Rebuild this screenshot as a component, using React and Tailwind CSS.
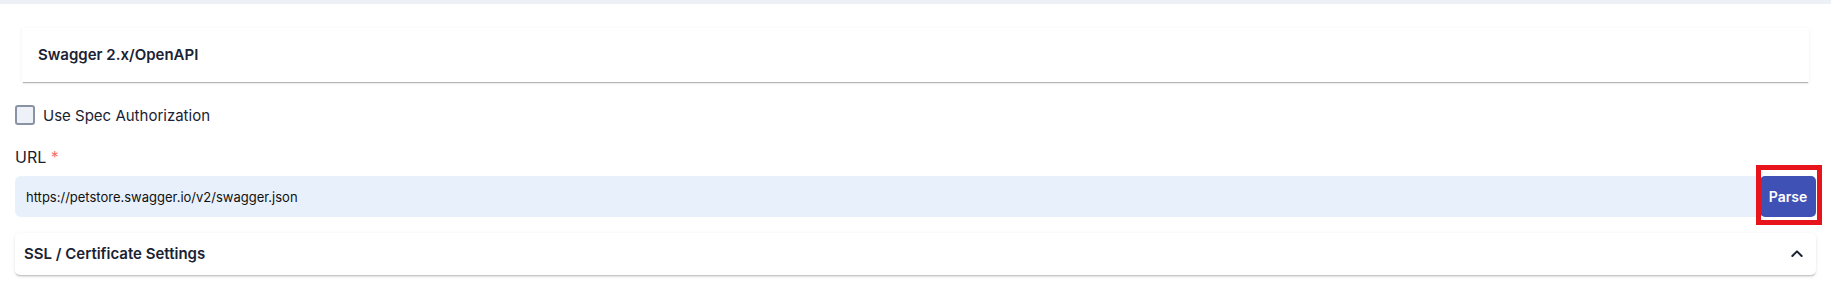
import { useState } from "react";

function ChevronUp() {
  return (
    <svg width="16" height="16" viewBox="0 0 24 24" fill="none" stroke="#1a2233" strokeWidth="3" strokeLinecap="round" strokeLinejoin="round">
      <path d="M5 15l7-7 7 7" />
    </svg>
  );
}

export default function App() {
  const [url, setUrl] = useState("https://petstore.swagger.io/v2/swagger.json");
  const [useAuth, setUseAuth] = useState(false);

  return (
    <div className="min-h-[302px] bg-white font-['Inter',sans-serif] text-[#1a2233]">
      <div className="h-[4px] bg-[#edf0f6]" />
      <div className="px-[15px]">
        {/* Spec type card */}
        <div className="mx-[7px] mt-[24px] flex h-[54px] items-center bg-white px-4 shadow-[0_2px_1px_-1px_rgba(0,0,0,0.25),0_1px_3px_0_rgba(0,0,0,0.08)]">
          <span className="text-[15px] font-semibold">Swagger 2.x/OpenAPI</span>
        </div>

        {/* Checkbox */}
        <label className="mt-[23px] flex h-[20px] cursor-pointer items-center gap-[8px]">
          <input
            type="checkbox"
            checked={useAuth}
            onChange={(e) => setUseAuth(e.target.checked)}
            className="h-[20px] w-[20px] appearance-none rounded-[3px] border-2 border-[#8a93a3] bg-[#eef2f8]"
          />
          <span className="text-[15px] leading-none text-[#1a2233]">Use Spec Authorization</span>
        </label>

        {/* URL */}
        <div className="mt-[20px] text-[16px] leading-[24px]">
          URL <span className="text-[#f87171]">*</span>
        </div>
        <div className="relative mt-[7px] flex h-[41px]">
          <input
            autoFocus
            value={url}
            onFocus={(e) => e.target.setSelectionRange(url.length, url.length)}
            onChange={(e) => setUrl(e.target.value)}
            className="h-full flex-1 rounded-l-[6px] bg-[#e8f0fc] pl-[11px] text-[13px] text-[#111] caret-black outline-none"
          />
          <button className="h-full w-[56px] rounded-[5px] bg-[#3f51b5] text-[14px] font-semibold text-white">
            Parse
          </button>
          <div className="pointer-events-none absolute -bottom-[8px] -right-[6px] -top-[11px] w-[66px] border-[5px] border-[#e8141b]" />
        </div>

        {/* SSL settings */}
        <div className="mt-[16px] flex h-[42px] items-center justify-between rounded-[5px] bg-white pl-[9px] pr-[11px] shadow-[0_2px_2px_-1px_rgba(0,0,0,0.25),0_1px_4px_0_rgba(0,0,0,0.08)]">
          <span className="text-[15px] font-semibold">SSL / Certificate Settings</span>
          <ChevronUp />
        </div>
      </div>
    </div>
  );
}
